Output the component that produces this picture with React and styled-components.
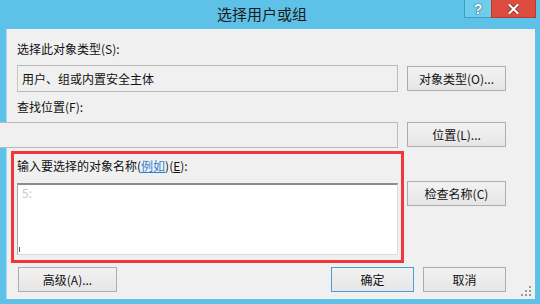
import styled, { createGlobalStyle } from "styled-components";

const GlobalStyle = createGlobalStyle`
    html, body {
        margin: 0;
        padding: 0;
        overflow: hidden;
    }
    body {
        font-family: "Noto Sans CJK SC", "Liberation Sans", sans-serif;
        font-size: 12px;
        color: #111;
    }
`;

const FONT = `"Noto Sans CJK SC", "Liberation Sans", sans-serif`;

const Window = styled.div`
    width: 540px;
    height: 304px;
    box-sizing: border-box;
    background: #5ec2e8;
    display: flex;
    flex-direction: column;
`;

const TitleBar = styled.div`
    height: 29px;
    flex: none;
    display: flex;
    align-items: flex-start;
    padding-right: 4px;
`;

const Title = styled.div`
    flex: 1;
    height: 29px;
    line-height: 28px;
    padding-left: 60px;
    text-align: center;
    font-family: ${FONT};
    font-size: 15px;
    color: #1b1b1b;
`;

const CaptionButton = styled.div`
    height: 18px;
    width: ${(p) => p.$w}px;
    display: flex;
    align-items: center;
    justify-content: center;
    box-sizing: border-box;
    background: ${(p) => (p.$close ? "#dc4b3e" : "#6fcdeb")};
    border: 1px solid ${(p) => (p.$close ? "#b8392e" : "#3e9fc6")};
    border-top: none;
    border-right: ${(p) => (p.$close ? "1px solid #b8392e" : "none")};
`;

const HelpGlyph = styled.span`
    font-family: "Liberation Sans", sans-serif;
    font-weight: bold;
    font-size: 14px;
    line-height: 14px;
    color: #fff;
    text-shadow: 0 0 1px #1f5a73, 0 0 1px #1f5a73, 0 0 1px #1f5a73;
`;

const Panel = styled.div`
    flex: 1;
    position: relative;
    margin: 0 5px 5px 6px;
    background: #f0f0f0;
    border-left: 1px solid #9fdcf1;
    box-sizing: border-box;
    padding: 12px 29px 0 10px;
    display: flex;
    flex-direction: column;
`;

const Label = styled.div`
    height: 16px;
    line-height: 16px;
    margin-top: ${(p) => p.$mt || 0}px;
    white-space: nowrap;
`;

const Row = styled.div`
    display: flex;
    align-items: flex-start;
    gap: 9px;
    margin-top: ${(p) => p.$mt || 0}px;
`;

const Field = styled.div`
    width: ${(p) => p.$w || 381}px;
    height: ${(p) => p.$h}px;
    margin-left: ${(p) => p.$ml || 0}px;
    flex: none;
    box-sizing: border-box;
    background: #f0f0f0;
    border: 1px solid #b9b9b9;
    border-left: ${(p) => (p.$open ? "none" : "1px solid #c8c8c8")};
    padding: 0 4px;
    line-height: ${(p) => p.$h - 2}px;
    white-space: nowrap;
`;

const Button = styled.button`
    width: ${(p) => p.$w || 99}px;
    height: 25px;
    flex: none;
    margin: ${(p) => p.$mt || 0}px 0 0 ${(p) => p.$ml || 0}px;
    padding: 0;
    box-sizing: border-box;
    font-family: ${FONT};
    font-size: 12px;
    color: #111;
    background: linear-gradient(#f2f2f2, #e6e6e6);
    border: 1px solid ${(p) => (p.$default ? "#4f9bd8" : "#adadad")};
    border-radius: 0;
`;

const Highlight = styled.div`
    width: 393px;
    flex: none;
    margin: 3px -6px 0 -6px;
    box-sizing: border-box;
    border: 3px solid #f2373a;
    padding: 4px 3px 5px 3px;
`;

const Link = styled.span`
    color: #2c7fd2;
    text-decoration: underline;
`;

const Key = styled.span`
    text-decoration: underline;
`;

const TextArea = styled.div`
    margin-top: 9px;
    height: 72px;
    box-sizing: border-box;
    background: #fff;
    border: 1px solid #dcdcdc;
    border-top: 2px solid #8c8c8c;
    border-left: 1px solid #a8a8a8;
    padding: 1px 4px;
    line-height: 14px;
    color: #c8c8c8;
    position: relative;
`;

const Caret = styled.span`
    position: absolute;
    left: 1px;
    bottom: 2px;
    width: 1px;
    height: 5px;
    background: #555;
`;

const Spacer = styled.div`
    flex: 1;
`;

const Grip = styled.svg`
    position: absolute;
    right: 3px;
    bottom: 2px;
`;

const GripDots = () => (
    <Grip width="12" height="12" viewBox="0 0 12 12">
        {[
            [9, 1],
            [9, 5],
            [5, 5],
            [9, 9],
            [5, 9],
            [1, 9],
        ].map(([x, y]) => (
            <rect key={`${x}-${y}`} x={x} y={y} width="2" height="2" fill="#9a9a9a" />
        ))}
    </Grip>
);

const App = () => {
    return (
        <>
            <GlobalStyle />
            <Window>
                <TitleBar>
                    <Title>选择用户或组</Title>
                    <CaptionButton $w={27}>
                        <HelpGlyph>?</HelpGlyph>
                    </CaptionButton>
                    <CaptionButton $w={45} $close>
                        <svg width="11" height="10" viewBox="0 0 11 10">
                            <path d="M1.5 1 L9.5 9 M9.5 1 L1.5 9" stroke="#6b1b14" strokeWidth="3.4" strokeLinecap="square" />
                            <path d="M1.5 1 L9.5 9 M9.5 1 L1.5 9" stroke="#fff" strokeWidth="2.2" strokeLinecap="square" />
                        </svg>
                    </CaptionButton>
                </TitleBar>
                <Panel>
                    <Label>选择此对象类型(S):</Label>
                    <Row $mt={8}>
                        <Field $h={27}>用户、组或内置安全主体</Field>
                        <Button $mt={1}>对象类型(O)...</Button>
                    </Row>
                    <Label $mt={7}>查找位置(F):</Label>
                    <Row $mt={7}>
                        <Field $h={26} $w={398} $ml={-17} $open />
                        <Button>位置(L)...</Button>
                    </Row>
                    <Row>
                        <Highlight>
                            <Label>
                                输入要选择的对象名称(<Link>例如</Link>)(<Key>E</Key>):
                            </Label>
                            <TextArea>
                                5:
                                <Caret />
                            </TextArea>
                        </Highlight>
                        <Button $mt={33}>检查名称(C)</Button>
                    </Row>
                    <Row $mt={4}>
                        <Button $ml={1}>高级(A)...</Button>
                        <Spacer />
                        <Button $w={83} $default>
                            确定
                        </Button>
                        <Button $w={83}>取消</Button>
                    </Row>
                    <GripDots />
                </Panel>
            </Window>
        </>
    );
};

export default App;
